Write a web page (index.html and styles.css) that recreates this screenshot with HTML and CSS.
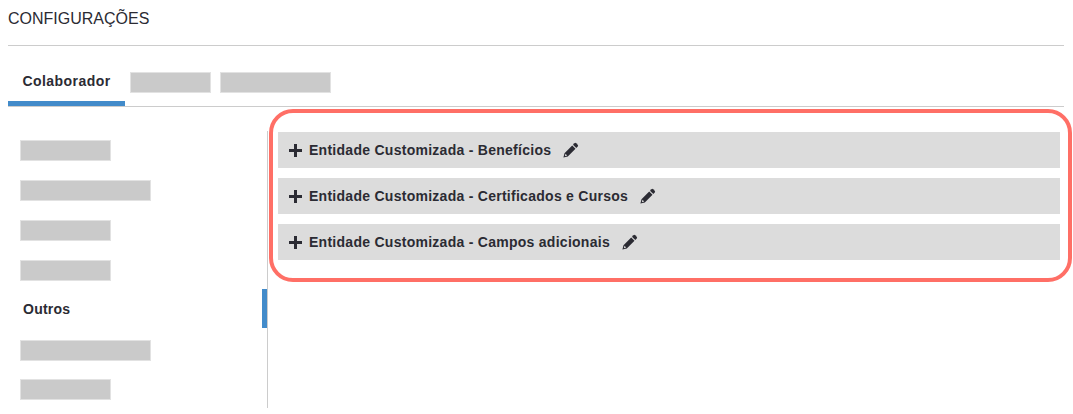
FILE: index.html
```html
<!DOCTYPE html>
<html lang="en">
<head>
    <title>Configurações</title>
    <link rel="stylesheet" href="styles.css">
</head>
<body>
    <svg class="icon-defs" width="0" height="0">
        <symbol id="plus" viewBox="0 0 13 13">
            <path d="M5 0h3v5h5v3H8v5H5V8H0V5h5z"/>
        </symbol>
        <symbol id="pencil" viewBox="0 0 16 16">
            <path d="M11.4 1.300a1.300 1.300 0 0 1 1.800 0l1.500 1.500a1.300 1.300 0 0 1 0 1.800l-1.400 1.400-3.300-3.300z"/>
            <path d="M9.200 3.500l3.300 3.300-7.700 7.700L0.400 15.600l1.100-4.400zM2.500 11.800l-.7 2.400 2.400-.7z" fill-rule="evenodd"/>
        </symbol>
    </svg>

    <div class="page">
        <h1 class="page-title">CONFIGURAÇÕES</h1>

        <!-- Tabs -->
        <nav class="tabs">
            <a class="tab active" href="#">Colaborador</a>
            <span class="redacted tab-block-sm"></span>
            <span class="redacted tab-block-lg"></span>
        </nav>

        <div class="content">
            <!-- Side menu -->
            <aside class="side-menu">
                <span class="redacted side-sm"></span>
                <span class="redacted side-lg"></span>
                <span class="redacted side-sm"></span>
                <span class="redacted side-sm"></span>
                <a class="side-item active" href="#">Outros</a>
                <span class="redacted side-lg"></span>
                <span class="redacted side-sm side-last"></span>
            </aside>

            <!-- Entities -->
            <section class="entities">
                <div class="highlight"></div>
                <div class="entity">
                    <svg class="plus"><use href="#plus"/></svg>
                    <span class="entity-name">Entidade Customizada - Benefícios</span>
                    <svg class="edit"><use href="#pencil"/></svg>
                </div>
                <div class="entity">
                    <svg class="plus"><use href="#plus"/></svg>
                    <span class="entity-name">Entidade Customizada - Certificados e Cursos</span>
                    <svg class="edit"><use href="#pencil"/></svg>
                </div>
                <div class="entity">
                    <svg class="plus"><use href="#plus"/></svg>
                    <span class="entity-name">Entidade Customizada - Campos adicionais</span>
                    <svg class="edit"><use href="#pencil"/></svg>
                </div>
            </section>
        </div>
    </div>
</body>
</html>
```

FILE: styles.css
```css
:root {
    --text-color: #2b2b33;
    --line-color: #cccccc;
    --blue: #428bca;
    --red: #ff6f66;
}

body {
    font-family: 'Liberation Sans', Arial, sans-serif;
    margin: 0;
    padding: 0;
    background-color: #ffffff;
    color: var(--text-color);
    overflow: hidden;
}

.icon-defs {
    position: absolute;
}

.page {
    width: 1056px;
    margin-left: 8px;
}

.page-title {
    margin: 0;
    padding-top: 10px;
    height: 35px;
    font-size: 16px;
    font-weight: normal;
    line-height: 18px;
    border-bottom: 1px solid var(--line-color);
}

.tabs {
    display: flex;
    align-items: flex-start;
    height: 60px;
    border-bottom: 1px solid var(--line-color);
}

.tab {
    box-sizing: border-box;
    width: 117px;
    height: 60px;
    padding-top: 27px;
    text-align: center;
    font-size: 14px;
    font-weight: bold;
    line-height: 16px;
    letter-spacing: 0.45px;
    color: var(--text-color);
    text-decoration: none;
}

.tab.active {
    border-bottom: 5px solid var(--blue);
}

.redacted {
    display: block;
    flex-shrink: 0;
    box-sizing: border-box;
    height: 21px;
    background-color: #cacaca;
    border: 1px solid #e2e2e2;
}

.tab-block-sm {
    width: 81px;
    margin: 26px 0 0 5px;
}

.tab-block-lg {
    width: 111px;
    margin: 26px 0 0 9px;
}

.content {
    display: flex;
}

.side-menu {
    box-sizing: border-box;
    width: 260px;
    height: 301px;
    padding: 33px 0 0 12px;
    display: flex;
    flex-direction: column;
    gap: 19px;
    position: relative;
}

.side-menu::before {
    content: "";
    position: absolute;
    right: 0;
    top: 24px;
    bottom: 0;
    width: 1px;
    background-color: var(--line-color);
}

.side-sm {
    width: 91px;
}

.side-lg {
    width: 131px;
}

.side-last {
    margin-top: -1px;
}

.side-item {
    flex-shrink: 0;
    margin: -1px 0 2px 3px;
    font-size: 14px;
    font-weight: bold;
    line-height: 20px;
    letter-spacing: 0.25px;
    color: var(--text-color);
    text-decoration: none;
}

.side-item.active::after {
    content: "";
    position: absolute;
    right: 1px;
    top: 182px;
    width: 5px;
    height: 39px;
    background-color: var(--blue);
}

.entities {
    position: relative;
    width: 782px;
    margin-left: 10px;
    padding-top: 25px;
    display: flex;
    flex-direction: column;
    gap: 10px;
}

.entity {
    display: flex;
    align-items: center;
    height: 36px;
    padding-left: 11px;
    background-color: #dcdcdc;
}

.plus {
    width: 13px;
    height: 13px;
    margin-right: 7px;
    fill: var(--text-color);
}

.entity-name {
    font-size: 14px;
    font-weight: bold;
    letter-spacing: 0.27px;
}

.edit {
    width: 16px;
    height: 16px;
    margin-left: 12px;
    fill: var(--text-color);
}

/* drawn over the list */
.highlight {
    position: absolute;
    left: -9px;
    top: 2px;
    width: 803px;
    height: 173px;
    box-sizing: border-box;
    border: 4px solid var(--red);
    border-radius: 24px;
}
```
